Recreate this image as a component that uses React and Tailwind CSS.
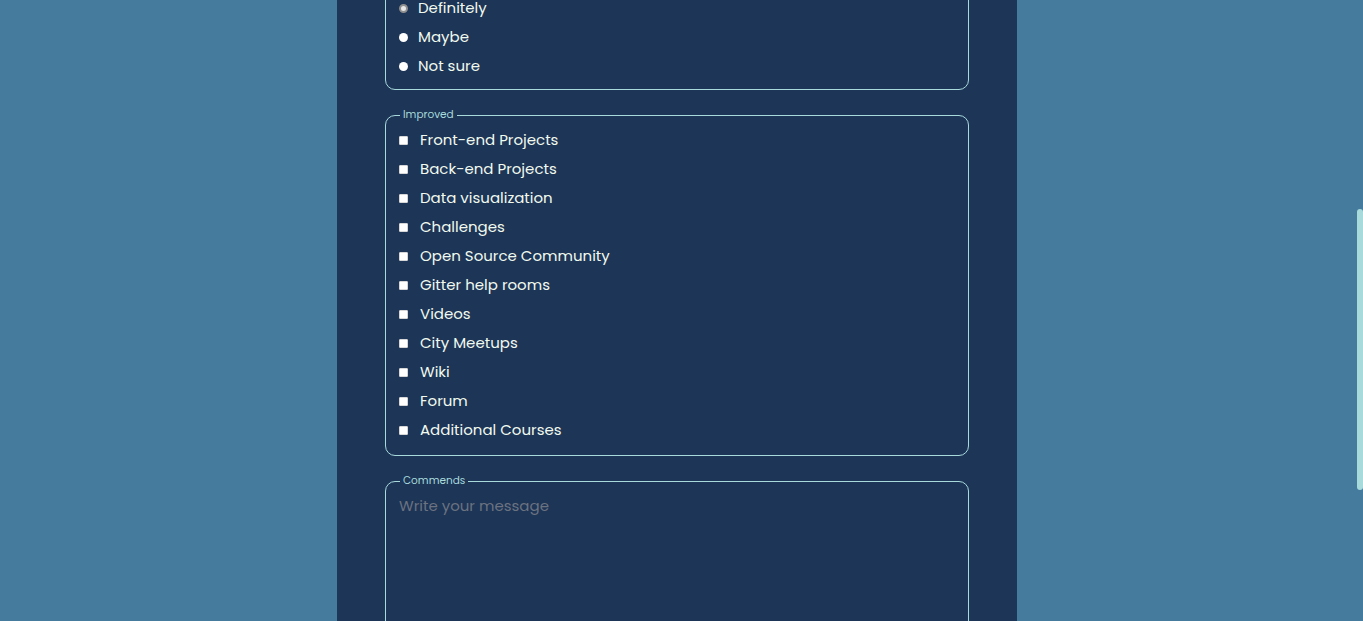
import React, { useLayoutEffect, useRef } from 'react';

const improved = [
  'Front-end Projects',
  'Back-end Projects',
  'Data visualization',
  'Challenges',
  'Open Source Community',
  'Gitter help rooms',
  'Videos',
  'City Meetups',
  'Wiki',
  'Forum',
  'Additional Courses'
];

const recommend = ['Definitely', 'Maybe', 'Not sure'];

const Field = ({ label, children, className = '' }) => (
  <fieldset className={`border border-[#a8dadc] rounded-[10px] px-[13px] ${className}`}>
    <legend className="ml-[1px] px-[3px] text-[10.5px] leading-[14px] text-[#a8dadc]">{label}</legend>
    {children}
  </fieldset>
);

const App = () => {
  const pageRef = useRef(null);
  const improvedRef = useRef(null);

  useLayoutEffect(() => {
    // page is shown scrolled down to the "Improved" block
    if (pageRef.current && improvedRef.current) {
      pageRef.current.scrollTop = improvedRef.current.offsetTop - 108;
    }
  }, []);

  return (
    <div className="flex h-screen w-full bg-[#457b9d] font-['Poppins','Open_Sans',sans-serif] text-[#f1faee]">
      <div ref={pageRef} className="relative flex-1 overflow-hidden">
        <main className="mx-auto w-[680px] bg-[#1d3557] px-12 pt-10 pb-16">
          {/* Header */}
          <h1 className="text-center text-3xl font-semibold mb-2">freeCodeCamp Survey Form</h1>
          <p className="text-center text-sm text-[#a8dadc] mb-8">
            Thank you for taking the time to help us improve the platform
          </p>

          <Field label="Name" className="mb-[18px] pb-[10px]">
            <input className="w-full bg-transparent outline-none py-1 placeholder:text-[#6b7280]" placeholder="Enter your name" />
          </Field>
          <Field label="Email" className="mb-[18px] pb-[10px]">
            <input className="w-full bg-transparent outline-none py-1 placeholder:text-[#6b7280]" placeholder="Enter your email" />
          </Field>
          <Field label="Age" className="mb-[18px] pb-[10px]">
            <input className="w-full bg-transparent outline-none py-1 placeholder:text-[#6b7280]" placeholder="Age" />
          </Field>
          <Field label="Current role" className="mb-[18px] pb-[10px]">
            <div className="py-1">Student</div>
          </Field>

          {/* Recommend */}
          <Field label="Would you recommend freeCodeCamp to a friend?" className="pt-[3px] pb-[8px]">
            {recommend.map((r, i) => (
              <label key={r} className="flex h-[29px] items-center text-[15px]">
                {i === 0 ? (
                  <span className="h-[9px] w-[9px] rounded-full border-2 border-[#8f8f8f] bg-[#e8e8e8]" />
                ) : (
                  <span className="h-[9px] w-[9px] rounded-full bg-white" />
                )}
                <span className="ml-[10px]">{r}</span>
              </label>
            ))}
          </Field>

          {/* Improved */}
          <div ref={improvedRef} className="mt-[18px]">
            <Field label="Improved" className="pt-[4px] pb-[10px]">
              {improved.map((item) => (
                <label key={item} className="flex h-[29px] items-center text-[15px]">
                  <span className="h-[9px] w-[9px] rounded-[1px] border border-[#d6d6d6] bg-white" />
                  <span className="ml-[12px]">{item}</span>
                </label>
              ))}
            </Field>
          </div>

          {/* Comments */}
          <Field label="Commends" className="mt-[18px] pb-[10px]">
            <textarea
              rows={8}
              className="block w-full resize-none bg-transparent pt-[7px] text-[15px] outline-none placeholder:text-[#6b7280]"
              placeholder="Write your message"
            />
          </Field>

          <button className="mt-6 w-full rounded-[10px] bg-[#a8dadc] py-3 font-semibold text-[#1d3557]">
            Submit
          </button>
        </main>
      </div>

      {/* scrollbar */}
      <div className="flex w-[9px] flex-col bg-[#457b9d] pl-[3px]">
        <div className="mt-[209px] h-[281px] w-full rounded-full bg-[#a8dadc]" />
      </div>
    </div>
  );
};

export default App;
